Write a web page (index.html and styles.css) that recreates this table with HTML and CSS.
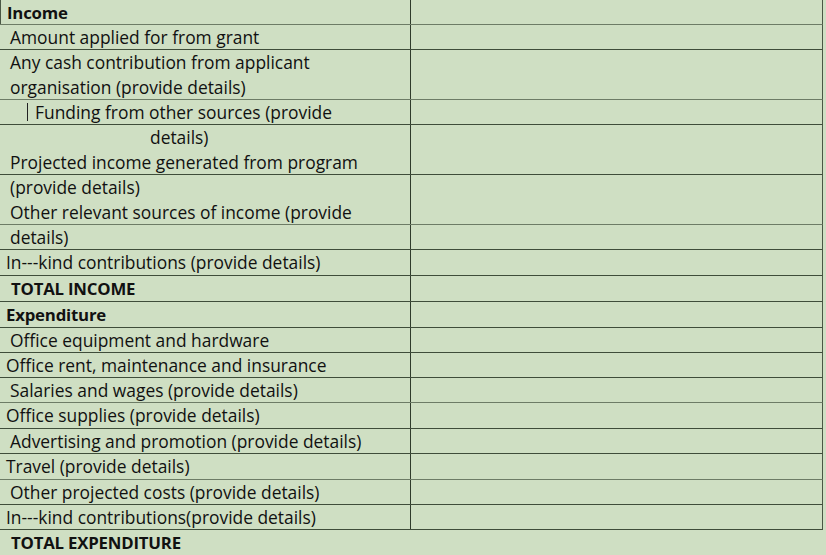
FILE: index.html
```html
<!DOCTYPE html>
<html>
<head>
<meta charset="utf-8">
<link rel="stylesheet" href="styles.css">
</head>
<body>
<div class="sheet">
  <div class="row h24 soft"><div class="c1 first bold in7">Income</div><div class="c2"></div></div>
  <div class="row h24"><div class="c1 in10">Amount applied for from grant</div><div class="c2"></div></div>
  <div class="row h49 soft"><div class="c1 in10">Any cash contribution from applicant<br>organisation (provide details)</div><div class="c2"></div></div>
  <div class="row h24"><div class="c1 in27"><span class="bar"></span>Funding from other sources (provide</div><div class="c2"></div></div>
  <div class="row h49"><div class="c1 in10"><span class="centered">details)</span><br>Projected income generated from program</div><div class="c2"></div></div>
  <div class="row h49 soft"><div class="c1 in10">(provide details)<br>Other relevant sources of income (provide</div><div class="c2"></div></div>
  <div class="row h24"><div class="c1 in10">details)</div><div class="c2"></div></div>
  <div class="row h25"><div class="c1 in7">In---kind contributions (provide details)</div><div class="c2"></div></div>
  <div class="row h25"><div class="c1 bold in11">TOTAL INCOME</div><div class="c2"></div></div>
  <div class="row h25"><div class="c1 bold in7">Expenditure</div><div class="c2"></div></div>
  <div class="row h24"><div class="c1 in10">Office equipment and hardware</div><div class="c2"></div></div>
  <div class="row h24"><div class="c1 in6">Office rent, maintenance and insurance</div><div class="c2"></div></div>
  <div class="row h24 soft"><div class="c1 in10">Salaries and wages (provide details)</div><div class="c2"></div></div>
  <div class="row h25"><div class="c1 in6">Office supplies (provide details)</div><div class="c2"></div></div>
  <div class="row h24"><div class="c1 in10">Advertising and promotion (provide details)</div><div class="c2"></div></div>
  <div class="row h25 soft"><div class="c1 in6">Travel (provide details)</div><div class="c2"></div></div>
  <div class="row h24"><div class="c1 in10">Other projected costs (provide details)</div><div class="c2"></div></div>
  <div class="row h24"><div class="c1 in6">In---kind contributions(provide details)</div><div class="c2"></div></div>
  <div class="total bold in11">TOTAL EXPENDITURE</div>
</div>
</body>
</html>
```
FILE: styles.css
```css
html, body {
  margin: 0;
  padding: 0;
  background: #cfdfc3;
}
body {
  font-family: "Open Sans", Lato, sans-serif;
  font-size: 17.4px;
  color: #111;
  overflow: hidden;
}
.sheet {
  width: 823px;
}
.row {
  display: flex;
  border-bottom: 1px solid #3f4d3a;
  border-right: 1px solid #4a5745;
}
.row.soft {
  border-bottom-color: #6d7c66;
}
.h24 { height: 24px; }
.h25 { height: 25px; }
.h49 { height: 49px; }
.c1 {
  width: 411px;
  border-right: 1px solid #2f3b2b;
  line-height: 25px;
  white-space: nowrap;
  box-sizing: border-box;
}
.c2 {
  flex: 1;
}
.first {
  border-left: 1px solid #4a5745;
}
.bold {
  font-weight: 700;
  font-size: 16.8px;
  letter-spacing: -0.2px;
}
.in6 { padding-left: 6px; }
.in7 { padding-left: 6px; }
.in10 { padding-left: 10px; }
.in11 { padding-left: 11px; }
.in27 { padding-left: 27px; }
.bar {
  display: inline-block;
  width: 0;
  height: 18px;
  border-left: 1px solid #222;
  margin-right: 7px;
  vertical-align: -2px;
}
.centered {
  padding-left: 140px;
}
.total {
  line-height: 25px;
  height: 26px;
}
```
